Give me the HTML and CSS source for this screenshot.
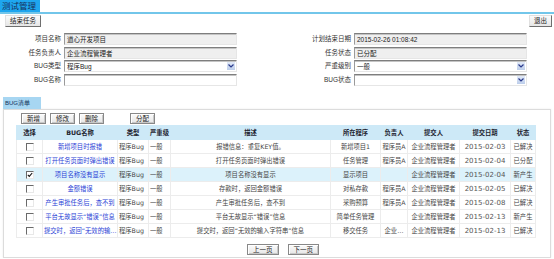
FILE: index.html
```html
<!DOCTYPE html>
<html lang="zh-CN">
<head>
  <meta charset="UTF-8">
  <title>测试管理</title>
  <link rel="stylesheet" href="styles.css">
</head>
<body>

<div class="titlebar"><span class="titletab">测试管理</span></div>

<div class="toolbar">
  <button class="btn">结束任务</button>
  <button class="btn">退出</button>
</div>

<div class="form">
  <label>项目名称</label>
  <div class="field readonly">道心开发项目</div>
  <label>计划结束日期</label>
  <div class="field readonly">2015-02-26 01:08:42</div>

  <label>任务负责人</label>
  <div class="field readonly">企业流程管理者</div>
  <label>任务状态</label>
  <div class="field readonly">已分配</div>

  <label>BUG类型</label>
  <div class="field select"><span>程序Bug</span><span class="arrow"><svg width="6" height="4" viewBox="0 0 6 4"><path d="M0.5 0.5 L3 3 L5.5 0.5" fill="none" stroke="#2a3a8c" stroke-width="1.2"/></svg></span></div>
  <label>严重级别</label>
  <div class="field select"><span>一般</span><span class="arrow"><svg width="6" height="4" viewBox="0 0 6 4"><path d="M0.5 0.5 L3 3 L5.5 0.5" fill="none" stroke="#2a3a8c" stroke-width="1.2"/></svg></span></div>

  <label>BUG名称</label>
  <div class="field"></div>
  <label>BUG状态</label>
  <div class="field select"><span></span><span class="arrow"><svg width="6" height="4" viewBox="0 0 6 4"><path d="M0.5 0.5 L3 3 L5.5 0.5" fill="none" stroke="#2a3a8c" stroke-width="1.2"/></svg></span></div>
</div>

<div class="section">
  <div class="tab">BUG清单</div>
  <div class="panel">
    <div class="actions">
      <button class="btn small">新增</button>
      <button class="btn small">修改</button>
      <button class="btn small">删除</button>
      <button class="btn small assign">分配</button>
    </div>

    <table class="grid">
      <colgroup>
        <col class="c-sel"><col class="c-name"><col class="c-type"><col class="c-level">
        <col class="c-desc"><col class="c-prog"><col class="c-owner"><col class="c-sub">
        <col class="c-date"><col class="c-state">
      </colgroup>
      <thead>
        <tr>
          <th>选择</th><th>BUG名称</th><th>类型</th><th>严重级</th><th>描述</th>
          <th>所在程序</th><th>负责人</th><th>提交人</th><th>提交日期</th><th>状态</th>
        </tr>
      </thead>
      <tbody>
        <tr>
          <td><span class="check"></span></td>
          <td><a href="#">新增项目时报错</a></td>
          <td class="left">程序Bug</td><td class="left">一般</td>
          <td>报错信息：重复KEY值。</td><td>新增项目1</td><td>程序员A</td>
          <td>企业流程管理者</td><td class="date">2015-02-03</td><td>已解决</td>
        </tr>
        <tr>
          <td><span class="check"></span></td>
          <td><a href="#">打开任务页面时弹出错误</a></td>
          <td class="left">程序Bug</td><td class="left">一般</td>
          <td>打开任务页面时弹出错误</td><td>任务管理</td><td>程序员A</td>
          <td>企业流程管理者</td><td class="date">2015-02-04</td><td>已分配</td>
        </tr>
        <tr class="selected">
          <td><span class="check"><svg width="6" height="6" viewBox="0 0 6 6"><path d="M0.8 2.8 L2.3 4.4 L5.2 1" fill="none" stroke="#111" stroke-width="1.1"/></svg></span></td>
          <td><a href="#">项目名称没有显示</a></td>
          <td class="left">程序Bug</td><td class="left">一般</td>
          <td>项目名称没有显示</td><td>显示项目</td><td></td>
          <td>企业流程管理者</td><td class="date">2015-02-04</td><td>新产生</td>
        </tr>
        <tr>
          <td><span class="check"></span></td>
          <td><a href="#">金额错误</a></td>
          <td class="left">程序Bug</td><td class="left">一般</td>
          <td>存款时，返回金额错误</td><td>对私存款</td><td>程序员A</td>
          <td>企业流程管理者</td><td class="date">2015-02-05</td><td>已解决</td>
        </tr>
        <tr>
          <td><span class="check"></span></td>
          <td><a href="#">产生审批任务后，查不到</a></td>
          <td class="left">程序Bug</td><td class="left">一般</td>
          <td>产生审批任务后，查不到</td><td>采购预算</td><td>程序员A</td>
          <td>企业流程管理者</td><td class="date">2015-02-08</td><td>已解决</td>
        </tr>
        <tr>
          <td><span class="check"></span></td>
          <td><a href="#">平台无故显示“错误”信息</a></td>
          <td class="left">程序Bug</td><td class="left">一般</td>
          <td>平台无故显示“错误”信息</td><td>简单任务管理</td><td></td>
          <td>企业流程管理者</td><td class="date">2015-02-13</td><td>新产生</td>
        </tr>
        <tr>
          <td><span class="check"></span></td>
          <td><a href="#">提交时，返回“无效的输…</a></td>
          <td class="left">程序Bug</td><td class="left">一般</td>
          <td>提交时，返回“无效的输入字符串”信息</td><td>移交任务</td><td>企业…</td>
          <td>企业流程管理者</td><td class="date">2015-02-13</td><td>已解决</td>
        </tr>
      </tbody>
    </table>

    <div class="pager">
      <button class="btn small">上一页</button>
      <button class="btn small">下一页</button>
    </div>
  </div>
</div>

</body>
</html>
```

FILE: styles.css
```css
body {
  margin: 0;
  font-family: "Liberation Sans", "Noto Sans CJK SC", sans-serif;
  font-size: 6.5px;
  color: #333;
  background-color: #fff;
}
.titlebar {
  height: 12px;
  border-bottom: 2px solid #72c6ea;
}
.titletab {
  display: inline-block;
  height: 12px;
  line-height: 12px;
  padding: 0 4px 0 2px;
  background-color: #1ea6ef;
  color: #16305a;
  font-size: 8.5px;
}
.toolbar {
  display: flex;
  justify-content: space-between;
  margin-top: 1px;
  padding: 0 2px 0 5px;
}
.btn {
  height: 12px;
  padding: 0 4px;
  font-family: inherit;
  font-size: 6.5px;
  line-height: 10px;
  color: #222;
  background: linear-gradient(#fbfbfb, #e6e6e6);
  border: 1px solid;
  border-color: #e0e0e0 #6f6f6f #6f6f6f #e0e0e0;
  cursor: pointer;
}
.btn.small {
  height: 11px;
  line-height: 9px;
  padding: 0 5px;
  border-color: #888;
  box-shadow: inset 1px 1px 0 #fff, inset -1px -1px 0 #c8c8c8;
}
.form {
  display: grid;
  grid-template-columns: 61px 173px 111px 173px;
  grid-auto-rows: 12px;
  column-gap: 3px;
  row-gap: 1.5px;
  margin-top: 6px;
}
.form label {
  text-align: right;
  line-height: 12px;
  color: #333;
}
.field {
  display: flex;
  align-items: center;
  box-sizing: border-box;
  height: 12px;
  padding: 0 1px 0 2px;
  background-color: #fff;
  border-top: 1px solid #7e7e7e;
  border-left: 1px solid #9a9a9a;
  border-right: 1px solid #e6e6e6;
  border-bottom: 1px solid #e6e6e6;
  box-shadow: inset 0 1px 0 #c4c4c4;
  color: #222;
}
.field.readonly {
  background-color: #efefef;
}
.arrow {
  display: flex;
  align-items: center;
  justify-content: center;
  margin-left: auto;
  width: 8px;
  height: 8px;
  background: linear-gradient(#e2eaf8, #bccdea);
}
.section {
  margin-top: 11.5px;
  padding: 0 3px;
  line-height: 0;
}
.tab {
  display: inline-block;
  width: 38px;
  box-sizing: border-box;
  height: 12px;
  line-height: 12px;
  padding-left: 2px;
  background-color: #a7d6f2;
  color: #12325a;
  font-size: 6px;
}
.panel {
  line-height: normal;
  border: 1px solid #dcdcdc;
  padding: 3px 0 1px 12px;
  box-shadow: 0 0 2px rgba(0, 0, 0, 0.08);
}
.actions {
  display: flex;
  gap: 4px;
  margin-left: 5px;
  margin-bottom: 1px;
}
.actions .assign {
  margin-left: 22px;
}
.grid {
  table-layout: fixed;
  width: 519px;
  border-collapse: collapse;
  font-family: "DejaVu Sans", "Noto Sans CJK SC", sans-serif;
  font-size: 6.3px;
  line-height: 12px;
}
.c-sel { width: 26px; }
.c-name { width: 75px; }
.c-type { width: 31px; }
.c-level { width: 22px; }
.c-desc { width: 160px; }
.c-prog { width: 50px; }
.c-owner { width: 27px; }
.c-sub { width: 52px; }
.c-date { width: 51px; }
.c-state { width: 25px; }
.grid th {
  height: 13px;
  padding: 0;
  background-color: #cde9f7;
  color: #1e2430;
  font-weight: bold;
  border: 1px solid #cde9f7;
}
.grid td {
  height: 13px;
  padding: 0 1px;
  text-align: center;
  white-space: nowrap;
  overflow: hidden;
  color: #444;
  border: 1px solid #ececec;
}
.grid td.left {
  text-align: left;
  padding-left: 1px;
}
.grid td.date {
  font-size: 7px;
  color: #555;
}
.grid tr.selected td {
  background-color: #dcf2fb;
}
.grid a {
  color: #2b3fd6;
  text-decoration: none;
}
.check {
  display: inline-flex;
  align-items: center;
  justify-content: center;
  width: 6px;
  height: 6px;
  vertical-align: middle;
  background-color: #fff;
  border-top: 1px solid #6a6a6a;
  border-left: 1px solid #6a6a6a;
  border-right: 1px solid #e8e8e8;
  border-bottom: 1px solid #e8e8e8;
}
.pager {
  display: flex;
  justify-content: center;
  gap: 9px;
  margin: 6px 0 1px 0;
}
```
